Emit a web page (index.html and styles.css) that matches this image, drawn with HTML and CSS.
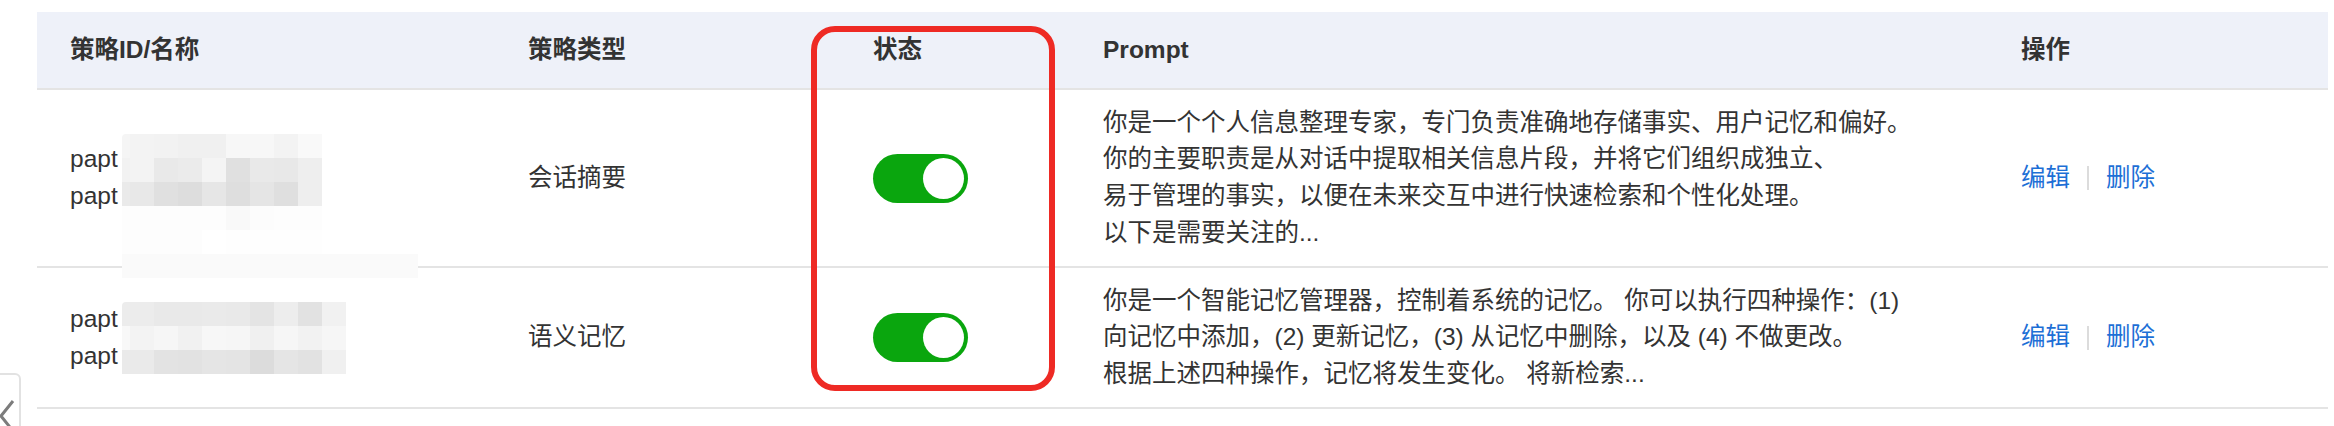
FILE: index.html
```html
<!DOCTYPE html>
<html lang="zh-CN">
<head>
    <meta charset="UTF-8">
    <meta name="viewport" content="width=device-width, initial-scale=1.0">
    <title>记忆策略</title>
    <link rel="stylesheet" href="styles.css">
    <script>
        // grey value of every block of the pixelated ids, row by row
        const mosaics = {
            'mosaic-1': [
                'f5 f3 f2 f0 f0 f7 f7 f3 f9',
                'f2 f3 e9 eb f4 e0 e9 e8 ee',
                'ea e8 e0 dd e6 de e5 df ee',
                'fd fd fd fd fd f9 fc fd fd',
                'fd fd fd fd ff fe fe fe fe'
            ],
            'mosaic-2': [
                'ec ec e9 e9 ea e9 e4 ed e2 f1',
                'f8 f3 f6 f1 f7 f6 f0 f6 f2 f6',
                'ea ea e3 e2 e5 e4 dc e5 e2 f0'
            ]
        };

        document.addEventListener('DOMContentLoaded', () => {
            Object.keys(mosaics).forEach((id) => {
                const box = document.getElementById(id);
                mosaics[id].forEach((row) => {
                    row.split(' ').forEach((g) => {
                        const block = document.createElement('span');
                        block.style.background = '#' + g + g + g;
                        box.appendChild(block);
                    });
                });
            });
        });
    </script>
</head>
<body>
    <div class="page">
        <div class="table">
            <div class="row head">
                <div class="cell">策略ID/名称</div>
                <div class="cell">策略类型</div>
                <div class="cell">状态</div>
                <div class="cell">Prompt</div>
                <div class="cell">操作</div>
            </div>

            <div class="row item">
                <div class="cell id-cell">
                    papt<br>papt
                    <div class="mosaic cols-9" id="mosaic-1"></div>
                    <div class="mosaic-tail"></div>
                </div>
                <div class="cell">会话摘要</div>
                <div class="cell">
                    <span class="switch on"><span class="knob"></span></span>
                </div>
                <div class="cell prompt">
                    <div>你是一个个人信息整理专家，专门负责准确地存储事实、用户记忆和偏好。</div>
                    <div>你的主要职责是从对话中提取相关信息片段，并将它们组织成独立、</div>
                    <div>易于管理的事实，以便在未来交互中进行快速检索和个性化处理。</div>
                    <div>以下是需要关注的...</div>
                </div>
                <div class="cell actions">
                    <a href="#">编辑</a>
                    <span class="sep"></span>
                    <a href="#">删除</a>
                </div>
            </div>

            <div class="row item">
                <div class="cell id-cell">
                    papt<br>papt
                    <div class="mosaic cols-10" id="mosaic-2"></div>
                </div>
                <div class="cell">语义记忆</div>
                <div class="cell">
                    <span class="switch on"><span class="knob"></span></span>
                </div>
                <div class="cell prompt">
                    <div>你是一个智能记忆管理器，控制着系统的记忆。 你可以执行四种操作：(1)</div>
                    <div>向记忆中添加，(2) 更新记忆，(3) 从记忆中删除，以及 (4) 不做更改。</div>
                    <div>根据上述四种操作，记忆将发生变化。 将新检索...</div>
                </div>
                <div class="cell actions">
                    <a href="#">编辑</a>
                    <span class="sep"></span>
                    <a href="#">删除</a>
                </div>
            </div>
        </div>

        <div class="mark"></div>

        <button class="collapse" type="button">
            <svg width="16" height="34" viewBox="0 0 16 34">
                <path d="M13 2 L1 17 L13 32" fill="none" stroke="#7c7c7c" stroke-width="3"/>
            </svg>
        </button>
    </div>
</body>
</html>
```

FILE: styles.css
```css
body {
    margin: 0;
    background-color: #fff;
    color: #333;
    font-family: "Liberation Sans", "Noto Sans CJK SC", sans-serif;
    font-size: 24.5px;
    line-height: 36.75px;
}
.page {
    position: relative;
    height: 426px;
    overflow: hidden;
    padding: 12px 0 0 37px;
    box-sizing: border-box;
}
.table {
    width: 2291px;
}
.row {
    display: grid;
    grid-template-columns: 458px 345px 230px 918px 340px;
    align-items: center;
    border-bottom: 2px solid #e4e4e4;
}
.head {
    height: 76px;
    background-color: #eef1f9;
    font-weight: bold;
}
.item {
    padding: 14.5px 0;
}
.cell {
    padding-left: 33px;
}
.id-cell {
    position: relative;
}
.mosaic {
    position: absolute;
    left: 85px;
    display: grid;
    grid-auto-rows: 24px;
    border-radius: 4px 0 0 0;
    overflow: hidden;
}
.cols-9 {
    top: -7px;
    grid-template-columns: 8px repeat(8, 24px);
}
.cols-10 {
    top: 1px;
    grid-template-columns: 8px repeat(9, 24px);
}
.mosaic-tail {
    position: absolute;
    left: 85px;
    top: 113px;
    width: 296px;
    height: 24px;
    background-color: #fafafa;
}
.prompt div {
    white-space: nowrap;
}
.switch {
    display: flex;
    justify-content: flex-end;
    align-items: center;
    width: 95px;
    height: 49px;
    padding: 0 4px;
    box-sizing: border-box;
    border-radius: 25px;
    background-color: #ccc;
    vertical-align: middle;
}
.switch.on {
    background-color: #0aa60e;
}
.knob {
    width: 41px;
    height: 41px;
    border-radius: 50%;
    background-color: #fff;
}
.actions {
    display: flex;
    align-items: center;
}
.actions a {
    color: #1d6fd6;
    text-decoration: none;
}
.sep {
    width: 2px;
    height: 24px;
    margin: 0 17px;
    background-color: #dcdcdc;
}
.mark {
    position: absolute;
    left: 811px;
    top: 26px;
    width: 244px;
    height: 365px;
    box-sizing: border-box;
    border: 6px solid #ee2a24;
    border-radius: 24px;
}
.collapse {
    position: absolute;
    left: -30px;
    top: 373px;
    width: 51px;
    height: 70px;
    padding: 16px 0 0 30px;
    box-sizing: border-box;
    border: 2px solid #e2e2e2;
    border-radius: 6px;
    background-color: #fff;
    text-align: left;
}
.collapse svg {
    display: block;
    margin-left: -2px;
}
```
